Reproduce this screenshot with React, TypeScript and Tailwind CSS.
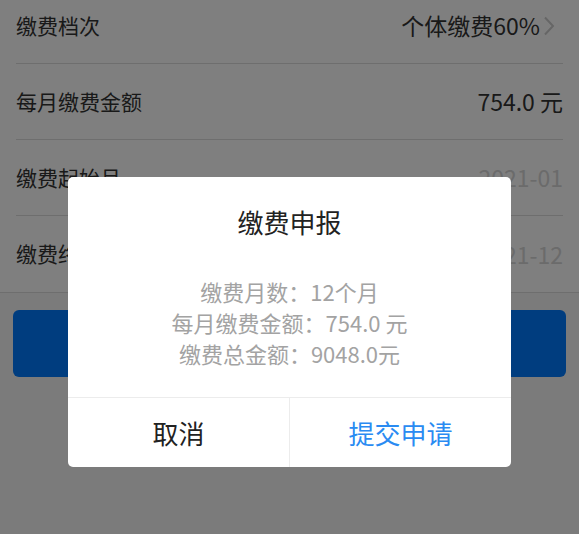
import React from "react";

const font = { fontFamily: '"Noto Sans CJK SC", "Noto Sans", sans-serif' };

function Row({ label, value, chevron, light, last }: { label: string; value: string; chevron?: boolean; light?: boolean; last?: boolean }) {
  return (
    <div className="px-4">
      <div className={`flex h-[76px] items-center justify-between ${last ? "" : "border-b border-[#dcdcdc]"}`}>
        <span className="text-[21px] text-[#333333]">{label}</span>
        <div className="flex items-center">
          <span className={`text-[23px] ${light ? "text-[#d6d6d6]" : "text-[#333333]"}`}>{value}</span>
          {chevron && (
            <svg width="12" height="20" viewBox="0 0 12 20" className="ml-[3px] mr-[8px]">
              <path d="M2 1.5 L10 10 L2 18.5" fill="none" stroke="#cccccc" strokeWidth="2" />
            </svg>
          )}
        </div>
      </div>
    </div>
  );
}

export default function App() {
  return (
    <div className="relative min-h-[534px] overflow-hidden bg-[#f6f6f6]" style={font}>
      <div className="-mt-[12px] border-b border-[#dcdcdc] bg-white">
        <Row label="缴费档次" value="个体缴费60%" chevron />
        <Row label="每月缴费金额" value="754.0 元" />
        <Row label="缴费起始月" value="2021-01" light />
        <Row label="缴费终止月" value="2021-12" light last />
      </div>
      <div className="mx-[13px] mt-[17px] flex h-[67px] items-center justify-center rounded-[6px] bg-[#007afe] text-[24px] text-white">
        提交申报
      </div>

      <div className="absolute inset-0 flex justify-center bg-black/50 pt-[177px]">
        <div className="flex h-[290px] w-[443px] flex-col rounded-[5px] bg-white">
          <div className="pt-[28px] text-center text-[26px] leading-[34px] text-[#222222]">缴费申报</div>
          <div className="mt-[37px] flex flex-col items-center text-[22px] leading-[31px] text-[#a3a3a3]">
            <span>缴费月数：12个月</span>
            <span>每月缴费金额：754.0 元</span>
            <span>缴费总金额：9048.0元</span>
          </div>
          <div className="mt-auto flex h-[70px] border-t border-[#ececec]">
            <div className="flex flex-1 items-center justify-center border-r border-[#ececec] text-[26px] text-[#222222]">取消</div>
            <div className="flex flex-1 items-center justify-center text-[26px] text-[#2a8bf2]">提交申请</div>
          </div>
        </div>
      </div>
    </div>
  );
}
